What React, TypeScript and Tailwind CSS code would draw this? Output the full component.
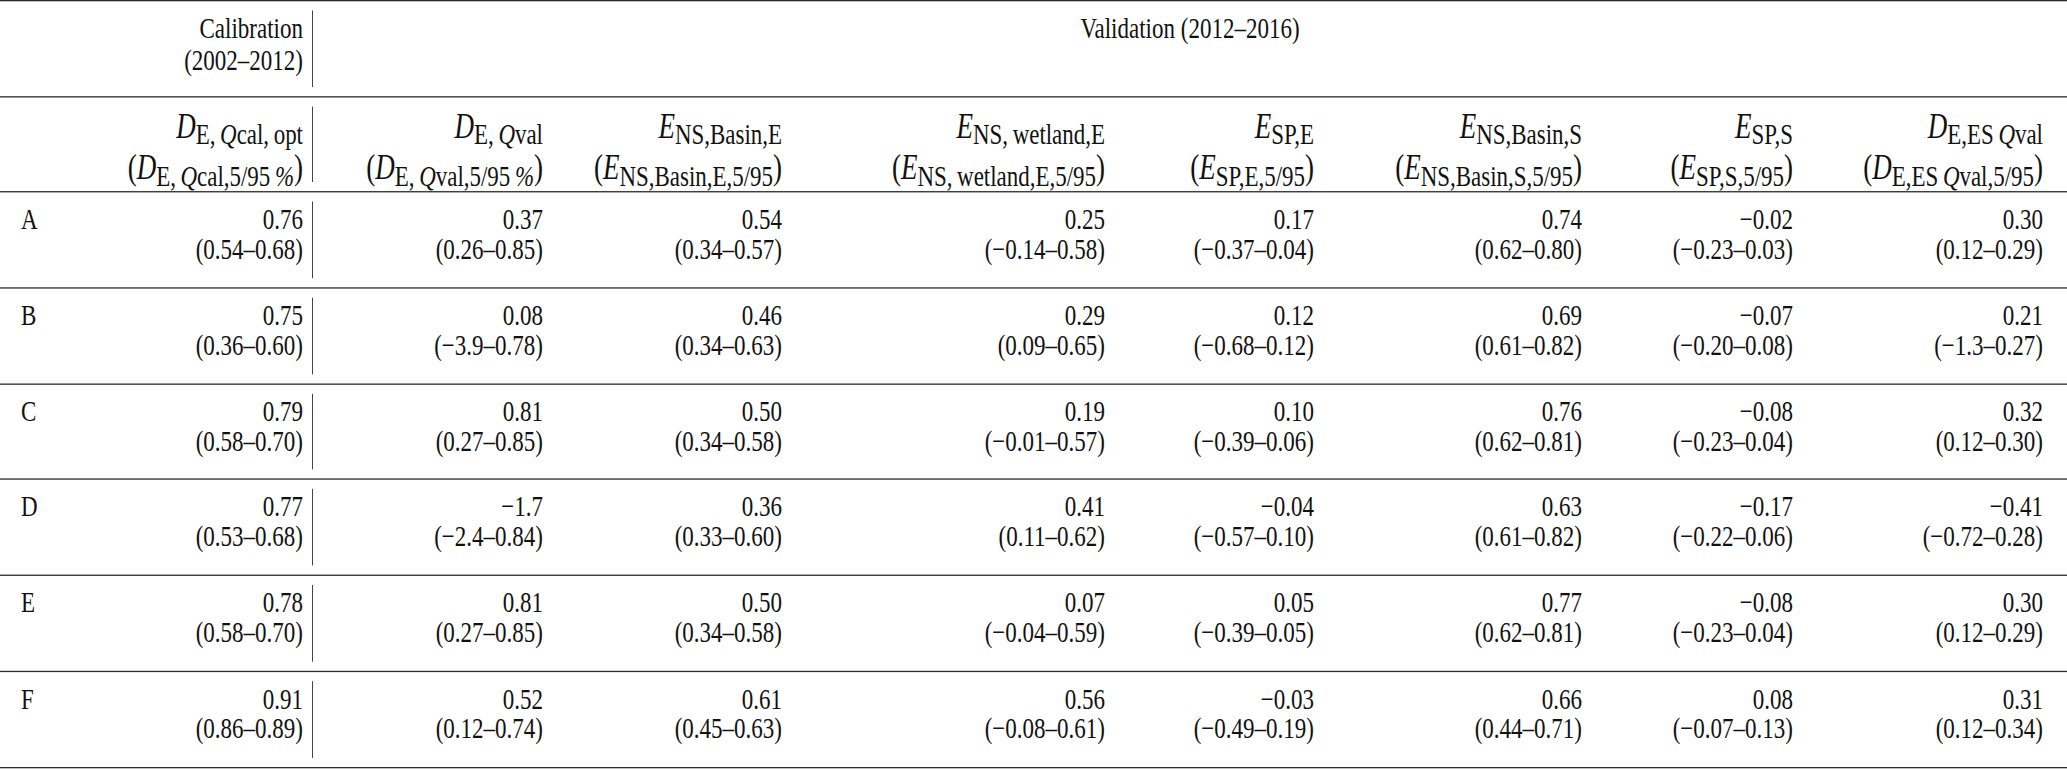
import React from "react";

type Cell = [string, string];

const rows: { label: string; cells: Cell[] }[] = [
  {
    label: "A",
    cells: [
      ["0.76", "(0.54–0.68)"],
      ["0.37", "(0.26–0.85)"],
      ["0.54", "(0.34–0.57)"],
      ["0.25", "(−0.14–0.58)"],
      ["0.17", "(−0.37–0.04)"],
      ["0.74", "(0.62–0.80)"],
      ["−0.02", "(−0.23–0.03)"],
      ["0.30", "(0.12–0.29)"],
    ],
  },
  {
    label: "B",
    cells: [
      ["0.75", "(0.36–0.60)"],
      ["0.08", "(−3.9–0.78)"],
      ["0.46", "(0.34–0.63)"],
      ["0.29", "(0.09–0.65)"],
      ["0.12", "(−0.68–0.12)"],
      ["0.69", "(0.61–0.82)"],
      ["−0.07", "(−0.20–0.08)"],
      ["0.21", "(−1.3–0.27)"],
    ],
  },
  {
    label: "C",
    cells: [
      ["0.79", "(0.58–0.70)"],
      ["0.81", "(0.27–0.85)"],
      ["0.50", "(0.34–0.58)"],
      ["0.19", "(−0.01–0.57)"],
      ["0.10", "(−0.39–0.06)"],
      ["0.76", "(0.62–0.81)"],
      ["−0.08", "(−0.23–0.04)"],
      ["0.32", "(0.12–0.30)"],
    ],
  },
  {
    label: "D",
    cells: [
      ["0.77", "(0.53–0.68)"],
      ["−1.7", "(−2.4–0.84)"],
      ["0.36", "(0.33–0.60)"],
      ["0.41", "(0.11–0.62)"],
      ["−0.04", "(−0.57–0.10)"],
      ["0.63", "(0.61–0.82)"],
      ["−0.17", "(−0.22–0.06)"],
      ["−0.41", "(−0.72–0.28)"],
    ],
  },
  {
    label: "E",
    cells: [
      ["0.78", "(0.58–0.70)"],
      ["0.81", "(0.27–0.85)"],
      ["0.50", "(0.34–0.58)"],
      ["0.07", "(−0.04–0.59)"],
      ["0.05", "(−0.39–0.05)"],
      ["0.77", "(0.62–0.81)"],
      ["−0.08", "(−0.23–0.04)"],
      ["0.30", "(0.12–0.29)"],
    ],
  },
  {
    label: "F",
    cells: [
      ["0.91", "(0.86–0.89)"],
      ["0.52", "(0.12–0.74)"],
      ["0.61", "(0.45–0.63)"],
      ["0.56", "(−0.08–0.61)"],
      ["−0.03", "(−0.49–0.19)"],
      ["0.66", "(0.44–0.71)"],
      ["0.08", "(−0.07–0.13)"],
      ["0.31", "(0.12–0.34)"],
    ],
  },
];

// widths of the validation columns (col 2..8)
const widths = [
  "w-[230px]",
  "w-[239px]",
  "w-[323px]",
  "w-[209px]",
  "w-[268px]",
  "w-[211px]",
  "w-[250px]",
];

function Sub({ children }: { children: React.ReactNode }) {
  return <sub className="text-[0.85em]">{children}</sub>;
}

function Q() {
  return <i>Q</i>;
}

const headers: [React.ReactNode, React.ReactNode][] = [
  [
    <>
      <i>D</i>
      <Sub>
        E,&thinsp;<Q />val
      </Sub>
    </>,
    <>
      (<i>D</i>
      <Sub>
        E,&thinsp;<Q />val,5/95&thinsp;<i>%</i>
      </Sub>
      )
    </>,
  ],
  [
    <>
      <i>E</i>
      <Sub>NS,Basin,E</Sub>
    </>,
    <>
      (<i>E</i>
      <Sub>NS,Basin,E,5/95</Sub>)
    </>,
  ],
  [
    <>
      <i>E</i>
      <Sub>NS,&thinsp;wetland,E</Sub>
    </>,
    <>
      (<i>E</i>
      <Sub>NS,&thinsp;wetland,E,5/95</Sub>)
    </>,
  ],
  [
    <>
      <i>E</i>
      <Sub>SP,E</Sub>
    </>,
    <>
      (<i>E</i>
      <Sub>SP,E,5/95</Sub>)
    </>,
  ],
  [
    <>
      <i>E</i>
      <Sub>NS,Basin,S</Sub>
    </>,
    <>
      (<i>E</i>
      <Sub>NS,Basin,S,5/95</Sub>)
    </>,
  ],
  [
    <>
      <i>E</i>
      <Sub>SP,S</Sub>
    </>,
    <>
      (<i>E</i>
      <Sub>SP,S,5/95</Sub>)
    </>,
  ],
  [
    <>
      <i>D</i>
      <Sub>
        E,ES&thinsp;<Q />val
      </Sub>
    </>,
    <>
      (<i>D</i>
      <Sub>
        E,ES&thinsp;<Q />val,5/95
      </Sub>
      )
    </>,
  ],
];

function Divider() {
  return <div className="my-[7px] w-px shrink-0 bg-[#444]" />;
}

export default function App() {
  return (
    <div className="h-[769px] w-[2067px] overflow-hidden bg-white">
      <div
        className="origin-top scale-y-[1.3] border-t-[1.5px] border-[#2b2b2b] text-[23px] leading-[23px] text-[#111]"
        style={{ fontFamily: '"Liberation Serif", "Times New Roman", serif' }}
      >
        {/* header: periods */}
        <div className="flex h-[73.7px] border-b-[1.5px] border-[#2b2b2b] leading-[25px]">
          <div className="w-[100px] shrink-0" />
          <div className="w-[212px] shrink-0 pt-[8px] pr-[9px] text-right">
            <p>Calibration</p>
            <p>(2002–2012)</p>
          </div>
          <Divider />
          <div className="flex-1 pt-[8px] text-center">
            <p>Validation (2012–2016)</p>
          </div>
        </div>

        {/* header: metrics */}
        <div className="flex h-[73.7px] border-b-[1.5px] border-[#2b2b2b] text-[27px] leading-[32px]">
          <div className="w-[100px] shrink-0" />
          <div className="w-[212px] shrink-0 pt-[6px] pr-[9px] text-right">
            <p className="whitespace-nowrap">
              <i>D</i>
              <Sub>
                E,&thinsp;<Q />cal,&thinsp;opt
              </Sub>
            </p>
            <p className="whitespace-nowrap">
              (<i>D</i>
              <Sub>
                E,&thinsp;<Q />cal,5/95&thinsp;<i>%</i>
              </Sub>
              )
            </p>
          </div>
          <Divider />
          {headers.map(([top, bottom], i) => (
            <div key={i} className={`${widths[i]} shrink-0 pt-[6px] text-right`}>
              <p className="whitespace-nowrap">{top}</p>
              <p className="whitespace-nowrap">{bottom}</p>
            </div>
          ))}
        </div>

        {rows.map((row) => (
          <div key={row.label} className="flex h-[73.7px] border-b-[1.5px] border-[#2b2b2b]">
            <div className="w-[100px] shrink-0 pt-[9px] pl-[21px]">{row.label}</div>
            <div className="w-[212px] shrink-0 pt-[9px] pr-[9px] text-right">
              <p>{row.cells[0][0]}</p>
              <p>{row.cells[0][1]}</p>
            </div>
            <Divider />
            {row.cells.slice(1).map(([v, range], i) => (
              <div key={i} className={`${widths[i]} shrink-0 pt-[9px] text-right`}>
                <p>{v}</p>
                <p>{range}</p>
              </div>
            ))}
          </div>
        ))}
      </div>
    </div>
  );
}
